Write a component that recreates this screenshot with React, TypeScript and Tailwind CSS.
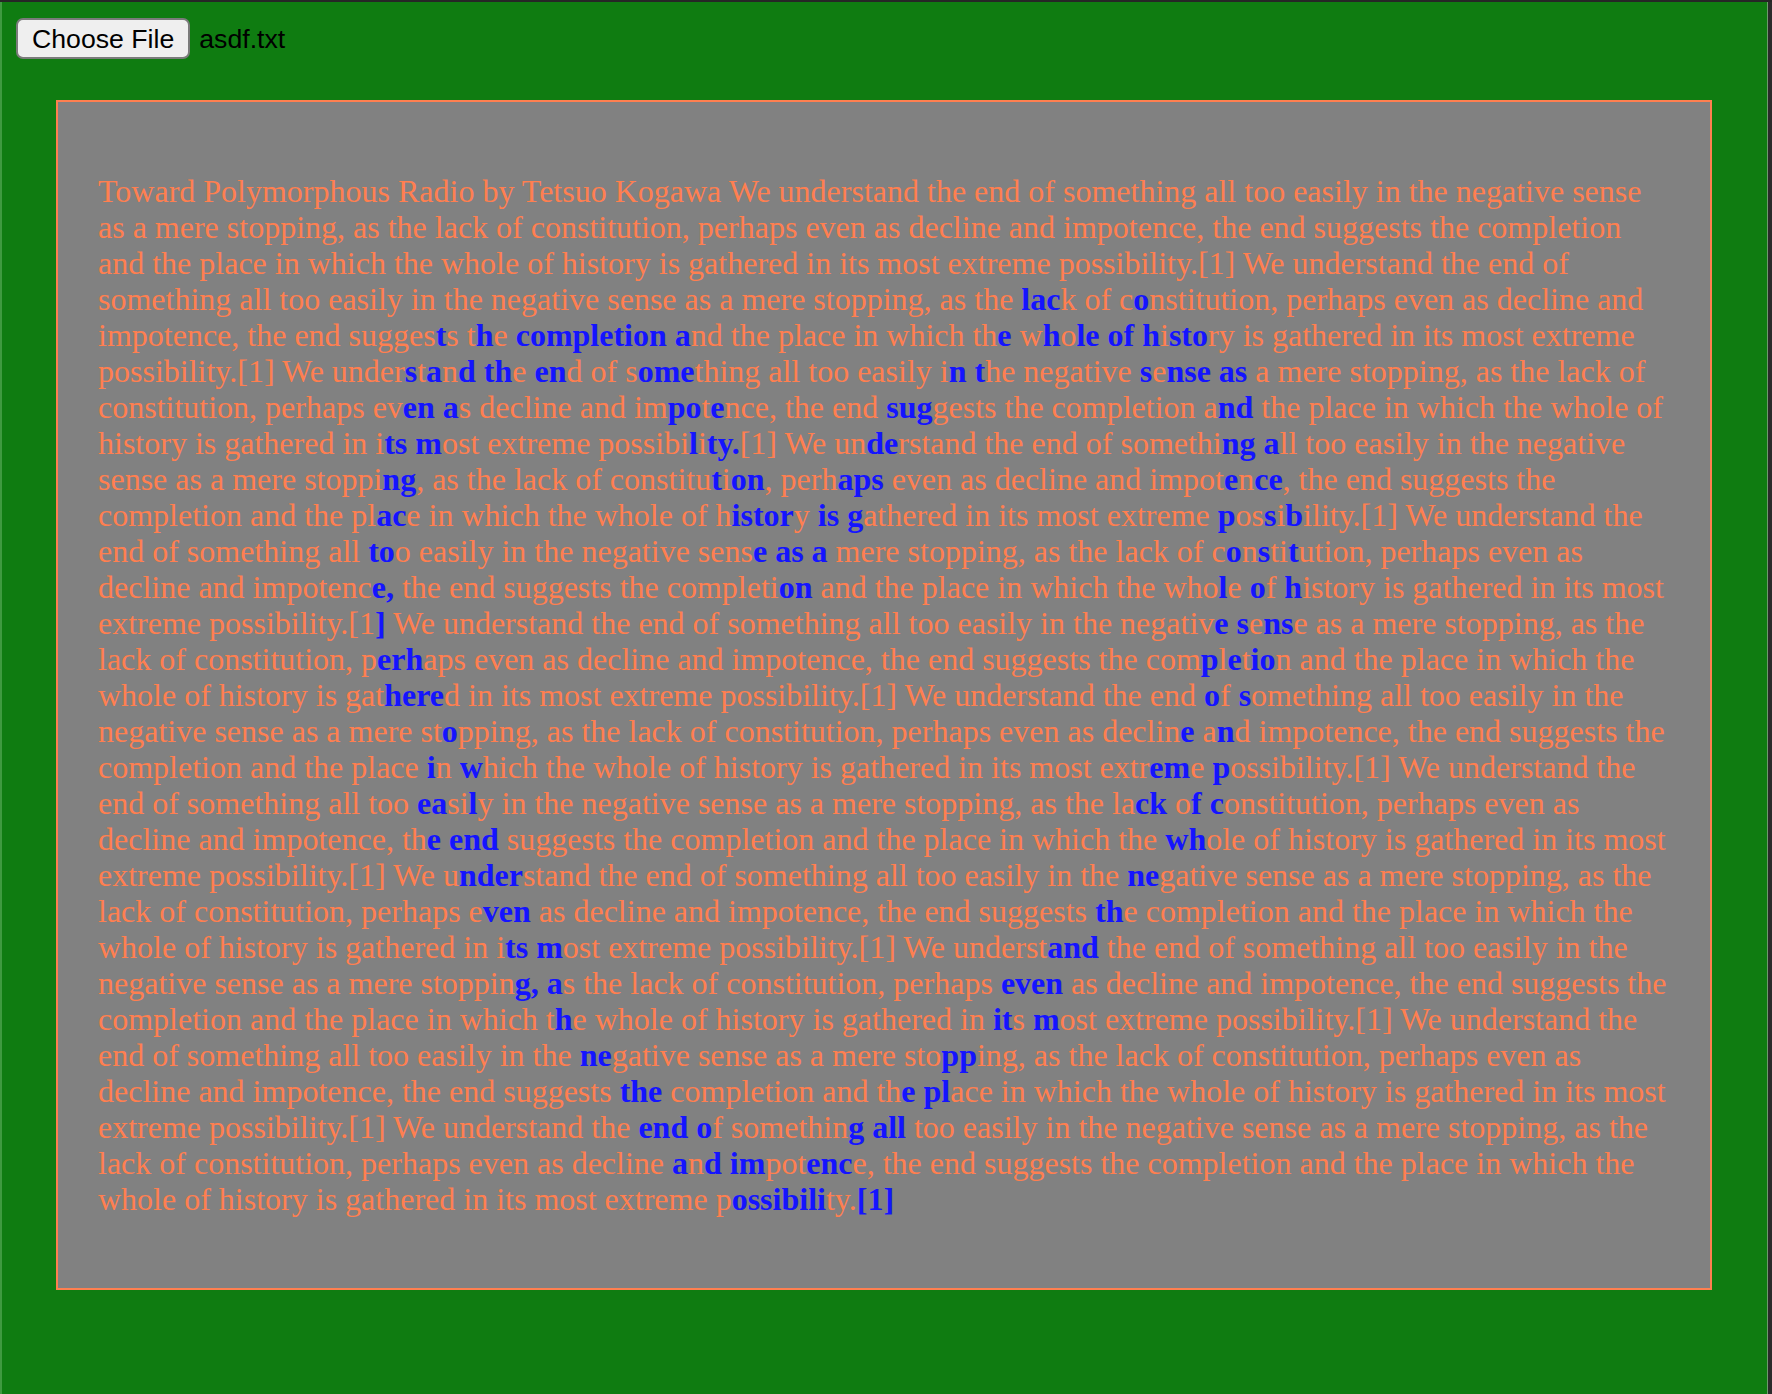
import React from 'react'

// {…} marks the bold blue runs
const lines = [
  'Toward Polymorphous Radio by Tetsuo Kogawa We understand the end of something all too easily in the negative sense',
  'as a mere stopping, as the lack of constitution, perhaps even as decline and impotence, the end suggests the completion',
  'and the place in which the whole of history is gathered in its most extreme possibility.[1] We understand the end of',
  'something all too easily in the negative sense as a mere stopping, as the {lac}k of c{o}nstitution, perhaps even as decline and',
  'impotence, the end sugges{t}s t{h}e {completion a}nd the place in which th{e} w{h}o{le of h}i{sto}ry is gathered in its most extreme',
  'possibility.[1] We under{s}t{a}n{d th}e {en}d of s{ome}thing all too easily i{n t}he negative {s}e{nse as} a mere stopping, as the lack of',
  'constitution, perhaps ev{en a}s decline and im{po}t{e}nce, the end {sug}gests the completion a{nd} the place in which the whole of',
  'history is gathered in i{ts m}ost extreme possibi{l}i{ty.}[1] We un{de}rstand the end of somethi{ng a}ll too easily in the negative',
  'sense as a mere stoppi{ng}, as the lack of constitu{t}i{on}, perh{aps} even as decline and impot{e}n{ce}, the end suggests the',
  'completion and the pl{ac}e in which the whole of h{istor}y {is g}athered in its most extreme {p}os{s}i{b}ility.[1] We understand the',
  'end of something all {to}o easily in the negative sens{e as a} mere stopping, as the lack of c{o}n{s}ti{t}ution, perhaps even as',
  'decline and impotenc{e,} the end suggests the completi{on} and the place in which the who{l}e {o}f {h}istory is gathered in its most',
  'extreme possibility.[1{]} We understand the end of something all too easily in the negativ{e s}e{ns}e as a mere stopping, as the',
  'lack of constitution, p{erh}aps even as decline and impotence, the end suggests the com{p}l{e}t{io}n and the place in which the',
  'whole of history is gat{here}d in its most extreme possibility.[1] We understand the end {o}f {s}omething all too easily in the',
  'negative sense as a mere st{o}pping, as the lack of constitution, perhaps even as declin{e} a{n}d impotence, the end suggests the',
  'completion and the place {i}n {w}hich the whole of history is gathered in its most extr{em}e {p}ossibility.[1] We understand the',
  'end of something all too {ea}si{l}y in the negative sense as a mere stopping, as the la{ck} o{f c}onstitution, perhaps even as',
  'decline and impotence, th{e end} suggests the completion and the place in which the {wh}ole of history is gathered in its most',
  'extreme possibility.[1] We u{nder}stand the end of something all too easily in the {ne}gative sense as a mere stopping, as the',
  'lack of constitution, perhaps e{ven} as decline and impotence, the end suggests {th}e completion and the place in which the',
  'whole of history is gathered in i{ts m}ost extreme possibility.[1] We underst{and} the end of something all too easily in the',
  'negative sense as a mere stoppin{g, a}s the lack of constitution, perhaps {even} as decline and impotence, the end suggests the',
  'completion and the place in which t{h}e whole of history is gathered in {it}s {m}ost extreme possibility.[1] We understand the',
  'end of something all too easily in the {ne}gative sense as a mere sto{pp}ing, as the lack of constitution, perhaps even as',
  'decline and impotence, the end suggests {the} completion and th{e pl}ace in which the whole of history is gathered in its most',
  'extreme possibility.[1] We understand the {end o}f somethin{g all} too easily in the negative sense as a mere stopping, as the',
  'lack of constitution, perhaps even as decline {a}n{d im}pot{enc}e, the end suggests the completion and the place in which the',
  'whole of history is gathered in its most extreme p{ossibili}ty.{[1]}',
]

function Line({ text }: { text: string }) {
  const parts = text.split(/(\{[^}]*\})/)
  return (
    <div className="whitespace-pre">
      {parts.map((p, i) =>
        p.startsWith('{') ? (
          <span key={i} className="font-bold text-[#1414ff]">
            {p.slice(1, -1)}
          </span>
        ) : (
          <span key={i}>{p}</span>
        ),
      )}
    </div>
  )
}

export default function App() {
  return (
    <div className="flex h-[1394px] w-full overflow-hidden border-t-2 border-[#262626] bg-[#0f7c11]">
      <main className="flex-1 border-l-2 border-[#3f9a40]">
        <div className="flex items-center gap-[9px] pl-[14px] pt-[16px] font-['Liberation_Sans',Arial,sans-serif] text-[26.67px] text-black">
          <button className="flex h-[41px] items-center rounded-[7px] border-2 border-[#7b7b7b] bg-[#efefef] px-[14px]">
            Choose File
          </button>
          <span>asdf.txt</span>
        </div>
        <div className="ml-[54px] mt-[41px] w-[1656px] border-2 border-[#ff7f50] bg-[#818181] px-[40px] py-[71px] font-['Liberation_Serif','Times_New_Roman',serif] text-[32px] leading-[36px] text-[#ff7f50]">
          {lines.map((l, i) => (
            <Line key={i} text={l} />
          ))}
        </div>
      </main>
      <div className="w-[5px] border-l border-[#6e9a6e] bg-[#2b2b2b]" />
    </div>
  )
}
